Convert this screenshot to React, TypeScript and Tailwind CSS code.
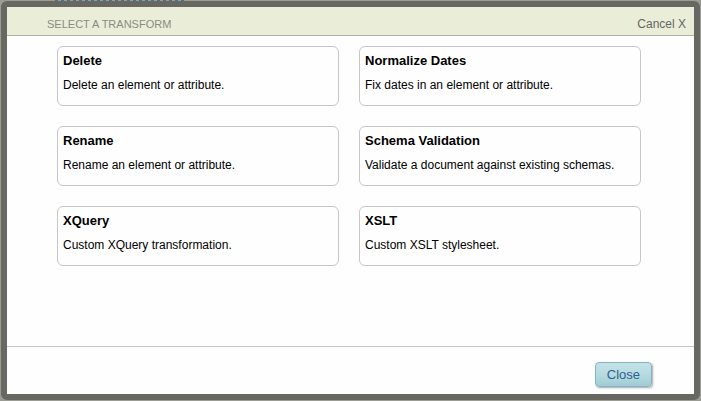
const transforms = [
  { name: "Delete", text: "Delete an element or attribute." },
  { name: "Normalize Dates", text: "Fix dates in an element or attribute." },
  { name: "Rename", text: "Rename an element or attribute." },
  { name: "Schema Validation", text: "Validate a document against existing schemas." },
  { name: "XQuery", text: "Custom XQuery transformation." },
  { name: "XSLT", text: "Custom XSLT stylesheet." },
];

export default function App() {
  return (
    <div className="flex min-h-screen flex-col bg-[#9b9d94] px-px pb-px font-['Liberation_Sans',Arial,sans-serif]">
      {/* sliver of the page behind the dialog */}
      <div className="ml-[54px] h-px w-[130px] bg-[repeating-linear-gradient(90deg,#3f7590_0_3px,#9b9d94_3px_6px)]" />
      <section
        role="dialog"
        aria-labelledby="dialog-title"
        className="flex flex-1 flex-col rounded-md border-6 border-[#666861] bg-[#fefefe]"
      >
        <header className="flex items-end justify-between border-b border-[#b0b3a0] bg-[#eaedd8] pt-2 pr-2 pb-[2px] pl-10">
          <h1 id="dialog-title" className="text-[11px] leading-[18px] text-[#8b8b84] uppercase">
            Select a transform
          </h1>
          <button type="button" className="text-[12px] leading-[18px] text-[#666]">
            Cancel X
          </button>
        </header>
        <main className="grid flex-1 grid-cols-2 content-start gap-5 pt-[10px] pr-[53px] pl-[50px]">
          {transforms.map((t) => (
            <button
              key={t.name}
              type="button"
              className="flex flex-col gap-[7px] rounded-md border border-[#c6c6c6] px-[5px] pt-[5px] pb-3 text-left text-black"
            >
              <span className="text-[13px] leading-[18px] font-bold">{t.name}</span>
              <span className="text-[12px] leading-4">{t.text}</span>
            </button>
          ))}
        </main>
        <footer className="flex justify-end border-t border-[#c6c6c6] pt-[15px] pr-[42px] pb-[7px]">
          <button
            type="button"
            className="rounded border border-[#84b5bd] bg-linear-to-b from-[#c3e3e8] via-[#b5dbe1] to-[#a0ccd5] px-[11px] text-[13px] leading-[23px] text-[#34608f] shadow-[1px_1px_2px_#aaa]"
          >
            Close
          </button>
        </footer>
      </section>
    </div>
  );
}
